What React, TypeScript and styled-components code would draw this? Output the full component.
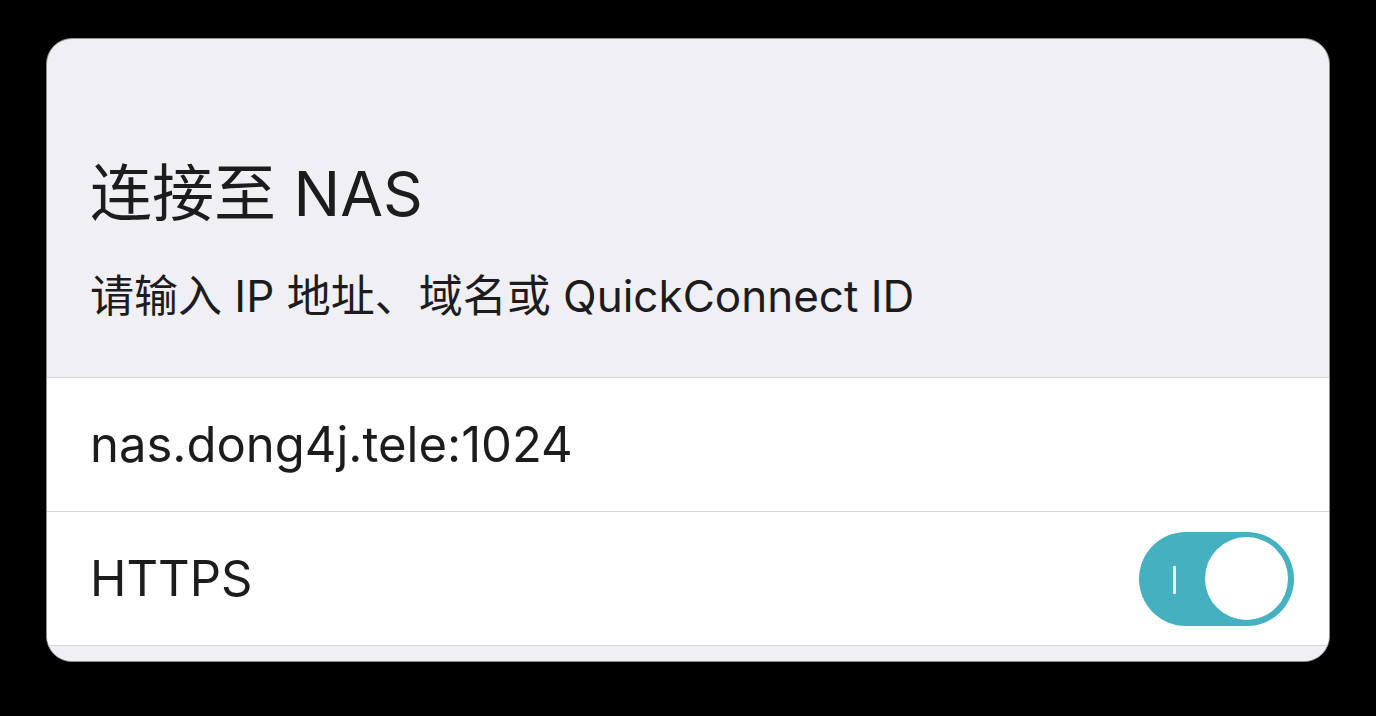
import React from "react";
import styled, { createGlobalStyle } from "styled-components";

const Global = createGlobalStyle`
  html, body { margin: 0; padding: 0; background: #000; }
  body { width: 1376px; height: 716px; overflow: hidden; font-family: Inter, "Noto Sans CJK SC", sans-serif; }
`;

const Page = styled.div`
  width: 1376px;
  height: 716px;
  background: #000;
  padding: 38px 46px 0 46px;
  box-sizing: border-box;
`;

const Card = styled.div`
  width: 1284px;
  height: 624px;
  box-sizing: border-box;
  border: 1px solid #8e8e93;
  border-radius: 26px;
  background: #efeff4;
  overflow: hidden;
  display: flex;
  flex-direction: column;
`;

const Header = styled.div`
  height: 339px;
  box-sizing: border-box;
  padding: 119px 0 0 43px;
  display: flex;
  flex-direction: column;
  border-bottom: 1px solid #d6d6da;
`;

const Title = styled.h1`
  margin: 0;
  font-size: 62px;
  font-weight: 400;
  line-height: 72px;
  color: #1c1c1e;
  letter-spacing: 0;
`;

const Subtitle = styled.p`
  margin: 40px 0 0 0;
  font-size: 44px;
  line-height: 52px;
  font-weight: 400;
  color: #1c1c1e;
`;

const Row = styled.div`
  height: 134px;
  box-sizing: border-box;
  background: #fff;
  border-bottom: 1px solid #d6d6da;
  display: flex;
  align-items: center;
  justify-content: space-between;
  padding: 0 35px 0 43px;
`;

const RowText = styled.span`
  font-size: 49px;
  color: #1c1c1e;
  font-weight: 400;
`;

const Toggle = styled.div<{ $on: boolean }>`
  position: relative;
  width: 155px;
  height: 94px;
  border-radius: 47px;
  background: ${(p) => (p.$on ? "#45b0bf" : "#e5e5ea")};
  display: flex;
  align-items: center;
  justify-content: ${(p) => (p.$on ? "flex-end" : "flex-start")};
  padding: 0 6px;
  box-sizing: border-box;
`;

const OnMark = styled.span`
  position: absolute;
  left: 34px;
  top: 34px;
  width: 3px;
  height: 28px;
  background: #fff;
  border-radius: 1px;
`;

const Knob = styled.div`
  width: 83px;
  height: 83px;
  border-radius: 50%;
  background: #fff;
`;

const Footer = styled.div`
  flex: 1;
  background: #efeff4;
`;

export default function App() {
  return (
    <Page>
      <Global />
      <Card>
        <Header>
          <Title>连接至 NAS</Title>
          <Subtitle>请输入 IP 地址、域名或 QuickConnect ID</Subtitle>
        </Header>
        <Row>
          <RowText>nas.dong4j.tele:1024</RowText>
        </Row>
        <Row>
          <RowText>HTTPS</RowText>
          <Toggle $on>
            <OnMark />
            <Knob />
          </Toggle>
        </Row>
        <Footer />
      </Card>
    </Page>
  );
}
